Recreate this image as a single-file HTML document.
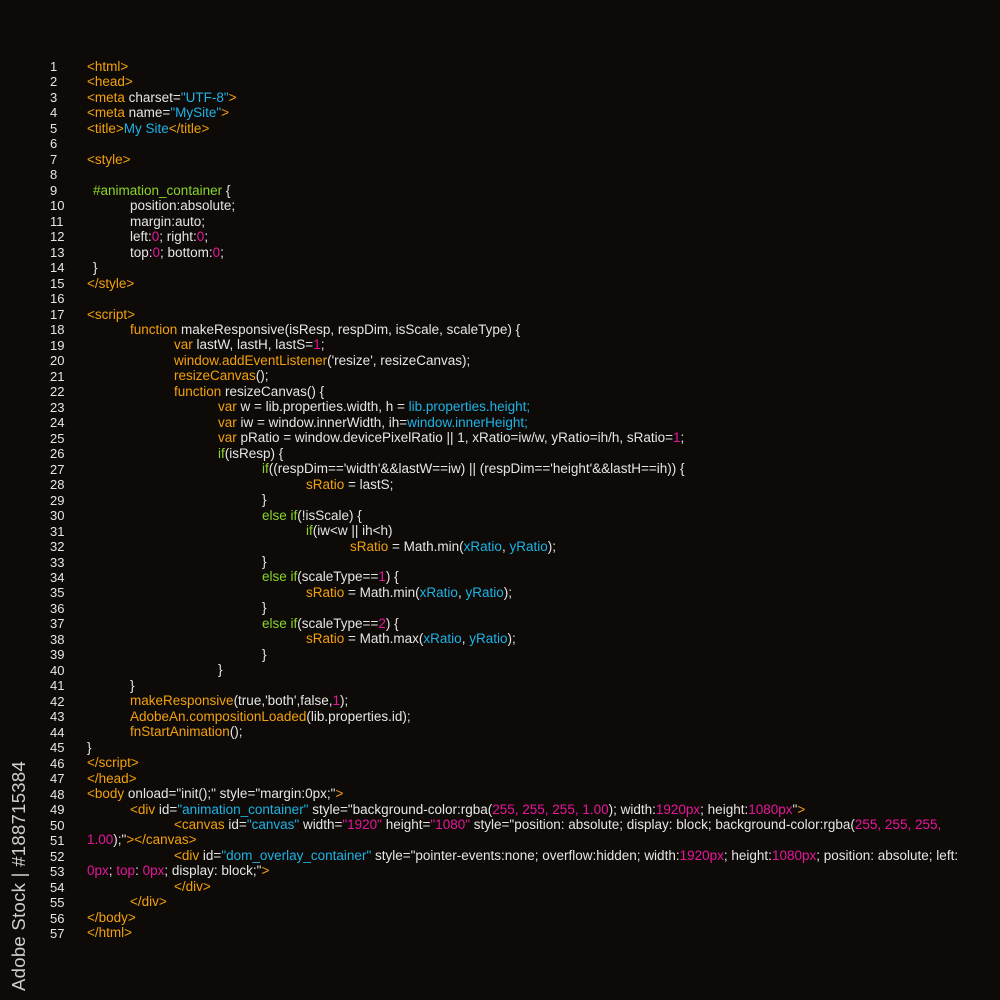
<!DOCTYPE html>
<html><head><meta charset="utf-8"><style>
html,body{margin:0;padding:0;background:#0e0a08;width:1000px;height:1000px;overflow:hidden;}
body{position:relative;font-family:"Liberation Sans",Arial,sans-serif;font-size:13.5px;color:#e6e6e6;}
#nums{position:absolute;left:50px;top:59px;line-height:15.48px;font-size:13px}
#code{position:absolute;left:0;top:59px;line-height:15.48px;white-space:nowrap;}
#code div{height:15.48px}
.o{color:#f2a10c}.c{color:#1db3e6}.m{color:#e6179b}.g{color:#8ad62a}
.l0{padding-left:87px}.l1{padding-left:130px}.l2{padding-left:174px}.l3{padding-left:218px}.l4{padding-left:262px}.l5{padding-left:306px}.l6{padding-left:350px}.lx{padding-left:93px}
#wm{position:absolute;left:8px;top:991px;transform-origin:0 0;transform:rotate(-90deg);font-size:18.5px;color:#cfcfcf;white-space:nowrap;letter-spacing:0.3px}
</style></head><body>
<div id="nums">1<br>2<br>3<br>4<br>5<br>6<br>7<br>8<br>9<br>10<br>11<br>12<br>13<br>14<br>15<br>16<br>17<br>18<br>19<br>20<br>21<br>22<br>23<br>24<br>25<br>26<br>27<br>28<br>29<br>30<br>31<br>32<br>33<br>34<br>35<br>36<br>37<br>38<br>39<br>40<br>41<br>42<br>43<br>44<br>45<br>46<br>47<br>48<br>49<br>50<br>51<br>52<br>53<br>54<br>55<br>56<br>57</div>
<div id="code">
<div class="l0 o">&lt;html&gt;</div>
<div class="l0 o">&lt;head&gt;</div>
<div class="l0"><span class="o">&lt;meta</span> charset=<span class="c">"UTF-8"</span><span class="o">&gt;</span></div>
<div class="l0"><span class="o">&lt;meta</span> name=<span class="c">"MySite"</span><span class="o">&gt;</span></div>
<div class="l0"><span class="o">&lt;title&gt;</span><span class="c">My Site</span><span class="o">&lt;/title&gt;</span></div>
<div></div>
<div class="l0 o">&lt;style&gt;</div>
<div></div>
<div class="lx"><span class="g">#animation_container</span> {</div>
<div class="l1">position:absolute;</div>
<div class="l1">margin:auto;</div>
<div class="l1">left:<span class="m">0</span>; right:<span class="m">0</span>;</div>
<div class="l1">top:<span class="m">0</span>; bottom:<span class="m">0</span>;</div>
<div class="lx">}</div>
<div class="l0 o">&lt;/style&gt;</div>
<div></div>
<div class="l0 o">&lt;script&gt;</div>
<div class="l1"><span class="o">function</span> makeResponsive(isResp, respDim, isScale, scaleType) {</div>
<div class="l2"><span class="o">var</span> lastW, lastH, lastS=<span class="m">1</span>;</div>
<div class="l2"><span class="o">window.addEventListener</span>('resize', resizeCanvas);</div>
<div class="l2"><span class="o">resizeCanvas</span>();</div>
<div class="l2"><span class="o">function</span> resizeCanvas() {</div>
<div class="l3"><span class="o">var</span> w = lib.properties.width, h = <span class="c">lib.properties.height;</span></div>
<div class="l3"><span class="o">var</span> iw = window.innerWidth, ih=<span class="c">window.innerHeight;</span></div>
<div class="l3"><span class="o">var</span> pRatio = window.devicePixelRatio || 1, xRatio=iw/w, yRatio=ih/h, sRatio=<span class="m">1</span>;</div>
<div class="l3"><span class="g">if</span>(isResp) {</div>
<div class="l4"><span class="g">if</span>((respDim=='width'&amp;&amp;lastW==iw) || (respDim=='height'&amp;&amp;lastH==ih)) {</div>
<div class="l5"><span class="o">sRatio</span> = lastS;</div>
<div class="l4">}</div>
<div class="l4"><span class="g">else if</span>(!isScale) {</div>
<div class="l5"><span class="g">if</span>(iw&lt;w || ih&lt;h)</div>
<div class="l6"><span class="o">sRatio</span> = Math.min(<span class="c">xRatio</span>, <span class="c">yRatio</span>);</div>
<div class="l4">}</div>
<div class="l4"><span class="g">else if</span>(scaleType==<span class="m">1</span>) {</div>
<div class="l5"><span class="o">sRatio</span> = Math.min(<span class="c">xRatio</span>, <span class="c">yRatio</span>);</div>
<div class="l4">}</div>
<div class="l4"><span class="g">else if</span>(scaleType==<span class="m">2</span>) {</div>
<div class="l5"><span class="o">sRatio</span> = Math.max(<span class="c">xRatio</span>, <span class="c">yRatio</span>);</div>
<div class="l4">}</div>
<div class="l3">}</div>
<div class="l1">}</div>
<div class="l1"><span class="o">makeResponsive</span>(true,'both',false,<span class="m">1</span>);</div>
<div class="l1"><span class="o">AdobeAn.compositionLoaded</span>(lib.properties.id);</div>
<div class="l1"><span class="o">fnStartAnimation</span>();</div>
<div class="l0">}</div>
<div class="l0 o">&lt;/script&gt;</div>
<div class="l0 o">&lt;/head&gt;</div>
<div class="l0"><span class="o">&lt;body</span> onload="init();" style="margin:0px;"<span class="o">&gt;</span></div>
<div class="l1"><span class="o">&lt;div</span> id=<span class="c">"animation_container"</span> style="background-color:rgba(<span class="m">255, 255, 255, 1.00</span>); width:<span class="m">1920px</span>; height:<span class="m">1080px</span>"<span class="o">&gt;</span></div>
<div class="l2"><span class="o">&lt;canvas</span> id=<span class="c">"canvas"</span> width=<span class="m">"1920"</span> height=<span class="m">"1080"</span> style="position: absolute; display: block; background-color:rgba(<span class="m">255, 255, 255,</span></div>
<div class="l0"><span class="m">1.00</span>);"<span class="o">&gt;&lt;/canvas&gt;</span></div>
<div class="l2"><span class="o">&lt;div</span> id=<span class="c">"dom_overlay_container"</span> style="pointer-events:none; overflow:hidden; width:<span class="m">1920px</span>; height:<span class="m">1080px</span>; position: absolute; left:</div>
<div class="l0"><span class="m">0px</span>; <span class="m">top</span>: <span class="m">0px</span>; display: block;"<span class="o">&gt;</span></div>
<div class="l2 o">&lt;/div&gt;</div>
<div class="l1 o">&lt;/div&gt;</div>
<div class="l0 o">&lt;/body&gt;</div>
<div class="l0 o">&lt;/html&gt;</div>
</div>
<div id="wm">Adobe Stock | #188715384</div>
</body></html>
